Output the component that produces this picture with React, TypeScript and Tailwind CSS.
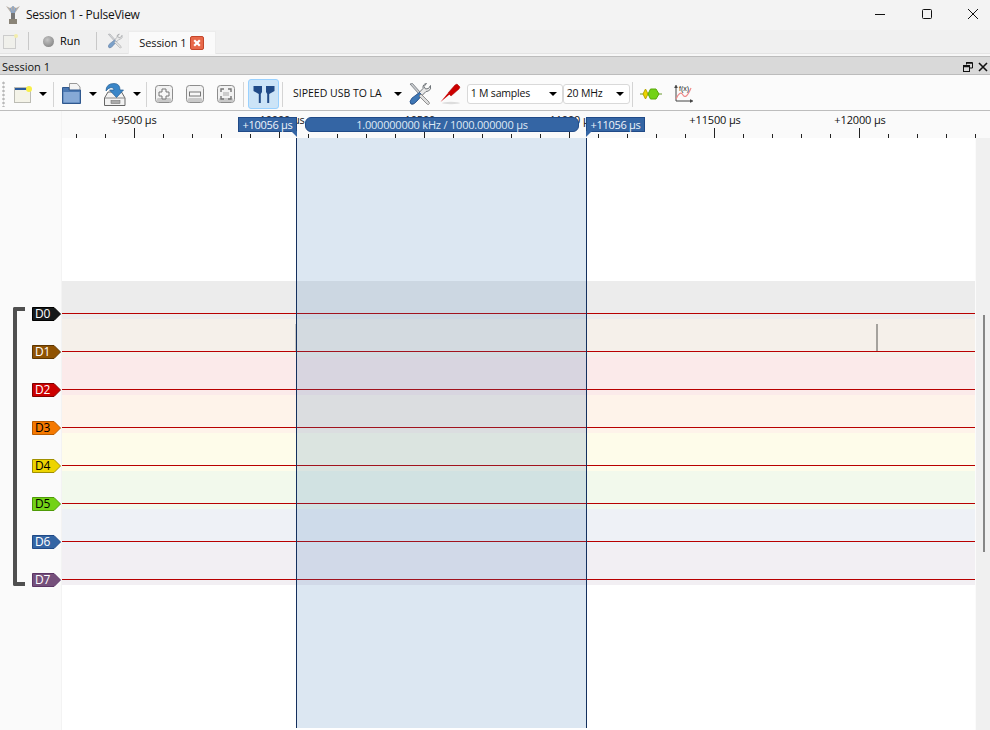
import React from "react";

const ff = { fontFamily: '"Segoe UI", "Open Sans", "Noto Sans", sans-serif' };

const channels = [
  { n: "D0", bg: "#16191a", bd: "#000000", fg: "#ffffff", band: "#ececec" },
  { n: "D1", bg: "#8f5202", bd: "#5e3601", fg: "#ffffff", band: "#f5f0ea" },
  { n: "D2", bg: "#cc0000", bd: "#800000", fg: "#ffffff", band: "#fbeaea" },
  { n: "D3", bg: "#f57900", bd: "#b85b00", fg: "#000000", band: "#fef3ea" },
  { n: "D4", bg: "#edd400", bd: "#a09000", fg: "#000000", band: "#fefcea" },
  { n: "D5", bg: "#73d216", bd: "#4e9a06", fg: "#000000", band: "#f2f9ec" },
  { n: "D6", bg: "#3465a4", bd: "#204a87", fg: "#ffffff", band: "#eef1f6" },
  { n: "D7", bg: "#75507b", bd: "#5c3566", fg: "#ffffff", band: "#f2eff3" },
];

const ticks = Array.from({ length: 63 }, (_, i) => i);

function Caret() {
  return <div className="w-0 h-0 border-l-[4px] border-r-[4px] border-t-[4px] border-l-transparent border-r-transparent border-t-black" />;
}

function Sep() {
  return <div className="w-px h-[25px] bg-[#d4d4d4]" />;
}

function SquareBtn({ children }: { children: React.ReactNode }) {
  return (
    <svg width="20" height="20" viewBox="0 0 20 20" className="shrink-0">
      <rect x="1.5" y="1.5" width="17" height="17" rx="3" fill="#f2f2f2" stroke="#8d8d8d" />
      <rect x="2.5" y="14" width="15" height="4" rx="2" fill="#c9c9c9" />
      {children}
    </svg>
  );
}

function Wrench({ size = 24, faded = false }: { size?: number; faded?: boolean }) {
  return (
    <svg width={size} height={size} viewBox="0 0 24 24" className="shrink-0" opacity={faded ? 0.65 : 1}>
      <path d="M18.5 1.5 L16 4.5 L17.5 7 L20.5 6.5 L22.5 3.5 Q23.5 7.5 20.5 9 L18 9.5 L6 21.5 Q4 23 3 21.5 Q2 20 3.5 18.5 L15 6.5 Q14.5 2 18.5 1.5Z" fill="#e9e9e9" stroke="#6f7478" strokeWidth="1" />
      <path d="M2 2 L4.5 1.5 L12 10 L10.5 11.5 Z" fill="#c9ccd0" stroke="#6f7478" strokeWidth="0.8" />
      <path d="M11.5 10.5 L14 13 L9 19 Q6 23 3 22 Q0.5 20 4 16 Z" fill="#3e77b5" stroke="#204a87" strokeWidth="0.8" />
      <path d="M13 12 L21 20 Q22 22 20.5 22.5 Q19 22.5 18 21 L11 14 Z" fill="#dedede" stroke="#777" strokeWidth="0.8" />
    </svg>
  );
}

function CursorLabel({ text, right }: { text: string; right?: boolean }) {
  return (
    <div className="relative">
      <div className="h-[15px] w-[59px] bg-[#3465a4] border border-[#204a87] text-[#eef3fa] text-[11px] tracking-[-0.3px] leading-[13px] text-center whitespace-nowrap">
        {text}
      </div>
      <div
        className={
          right
            ? "absolute right-0 top-[14px] w-0 h-0 border-t-[6px] border-l-[6px] border-t-[#3465a4] border-l-transparent"
            : "absolute left-0 top-[14px] w-0 h-0 border-t-[6px] border-r-[6px] border-t-[#3465a4] border-r-transparent"
        }
      />
    </div>
  );
}

export default function App() {
  return (
    <div className="w-[990px] h-[730px] overflow-hidden bg-[#fafafa] flex flex-col text-black" style={ff}>
      {/* Title bar */}
      <div className="h-[30px] bg-[#f3f3f3] flex items-center shrink-0">
        <svg width="16" height="20" viewBox="0 0 16 20" className="ml-[5px] shrink-0">
          <path d="M1 1 L6 8 H10 L15 1 L11 3 L8 1 L5 3 Z" fill="#b8b0a8" />
          <path d="M5 3 L7 8 M8 1 V8 M11 3 L9 8" stroke="#7aa0d0" strokeWidth="1" />
          <rect x="6" y="8" width="4" height="6" fill="#777" />
          <rect x="4" y="14" width="8" height="5" fill="#8a8478" />
        </svg>
        <span className="ml-[5px] text-[12px] tracking-[-0.24px] text-[#111]">Session 1 - PulseView</span>
        <div className="ml-auto -mr-[6px] flex items-center h-full">
          <svg width="46" height="30" viewBox="0 0 46 30"><path d="M17 14.5 H27" stroke="#111" /></svg>
          <svg width="46" height="30" viewBox="0 0 46 30"><rect x="18.5" y="9.5" width="9" height="9" rx="1" fill="none" stroke="#111" /></svg>
          <svg width="46" height="30" viewBox="0 0 46 30"><path d="M18 9 L28 19 M28 9 L18 19" stroke="#111" /></svg>
        </div>
      </div>
      {/* Tab row */}
      <div className="h-[24px] bg-[#f0f0f0] flex items-end shrink-0 border-b border-[#e4e4e4]">
        <div className="h-[24px] flex items-center">
          <svg width="16" height="16" viewBox="0 0 16 16" className="ml-[3px] shrink-0 opacity-50">
            <rect x="0.5" y="2.5" width="12" height="13" fill="#f1f1e8" stroke="#aaa" />
            <circle cx="13" cy="3" r="2" fill="#f6ec6a" />
          </svg>
          <div className="ml-[9px] w-px h-[18px] bg-[#c8c8c8]" />
          <div className="ml-[14px] w-[11px] h-[11px] rounded-full bg-[radial-gradient(circle_at_40%_35%,#c4c4c4,#777)]" />
          <span className="ml-[6px] text-[11px]">Run</span>
          <div className="ml-[16px] w-px h-[18px] bg-[#c8c8c8]" />
          <div className="ml-[10px]"><Wrench size={16} faded /></div>
        </div>
        <div className="ml-[5px] w-[88px] h-[23px] bg-[#fafafa] border-t border-x border-[#ececec] flex items-center pl-[10px] -mb-px">
          <span className="text-[11px] tracking-[-0.1px] text-[#111]">Session 1</span>
          <svg width="14" height="14" viewBox="0 0 14 14" className="ml-[4px]">
            <rect x="0.5" y="0.5" width="13" height="13" rx="1.5" fill="#e8694a" stroke="#c4462a" />
            <path d="M4.2 4.2 L9.8 9.8 M9.8 4.2 L4.2 9.8" stroke="#fff" strokeWidth="2.2" />
          </svg>
        </div>
      </div>
      <div className="h-[2px] bg-[#f7f7f7] shrink-0" />
      {/* Dock title */}
      <div className="h-[19px] bg-[#d9d9d9] border-y border-[#bcbcbc] flex items-center pt-[3px] shrink-0">
        <span className="ml-[2px] text-[11px] text-[#111]">Session 1</span>
        <div className="ml-auto flex items-center gap-[5px] pr-[2px]">
          <svg width="10" height="10" viewBox="0 0 10 10">
            <path d="M3.5 2.5 V0.5 H9.5 V6 H7" fill="none" stroke="#111" />
            <path d="M3 1 H9" stroke="#111" strokeWidth="1.5" />
            <rect x="0.5" y="3.5" width="6" height="6" fill="none" stroke="#111" />
            <path d="M0 4.5 H7" stroke="#111" strokeWidth="1.5" />
          </svg>
          <svg width="10" height="10" viewBox="0 0 10 10"><path d="M1 1 L9 9 M9 1 L1 9" stroke="#111" strokeWidth="1.6" /></svg>
        </div>
      </div>
      {/* Toolbar */}
      <div className="h-[36px] bg-[#fbfbfb] border-b border-[#bdbdbd] flex items-center pt-[3px] shrink-0">
        <div className="ml-[2px] w-[3px] h-[26px] bg-[radial-gradient(#b8b8b8_1px,transparent_1.2px)] bg-[length:3px_4px]" />
        <svg width="20" height="20" viewBox="0 0 20 20" className="ml-[8px] shrink-0">
          <rect x="1.5" y="3.5" width="16" height="15" fill="#f4f3e8" stroke="#bcbcb4" />
          <rect x="2" y="4" width="15" height="2" fill="#2a5a9c" />
          <circle cx="16" cy="5" r="3" fill="#f8ef4a" />
        </svg>
        <div className="ml-[6px]"><Caret /></div>
        <div className="ml-[6px]"><Sep /></div>
        <svg width="22" height="24" viewBox="0 0 22 24" className="ml-[7px] shrink-0">
          <path d="M8.5 1.5 H16 L19 5 V13 H8.5 Z" fill="#f4f4f4" stroke="#999" />
          <path d="M1.5 5.5 H8 V8 H19.5 V21.5 H1.5 Z" fill="#4b78b2" stroke="#30588e" />
          <rect x="2.5" y="10" width="16" height="10.5" fill="#86a9d6" />
        </svg>
        <div className="ml-[6px]"><Caret /></div>
        <svg width="24" height="24" viewBox="0 0 24 24" className="ml-[6px] shrink-0">
          <path d="M5 10 L1.5 16 V23.5 H22 V16 L18.5 10 Z" fill="#f2f2f2" stroke="#666" />
          <path d="M2 16 H22" stroke="#888" />
          <rect x="8" y="18.5" width="9" height="3" fill="#aaa" stroke="#666" strokeWidth="0.5" />
          <path d="M3 9 Q3 1.5 11 1.5 Q17 1.5 17 8 H20.5 L13.5 15.5 L6.5 8 H11 Q11 5.5 8 5.5 Q5 6 3 9 Z" fill="#3a86c8" stroke="#205a90" strokeWidth="0.7" />
        </svg>
        <div className="ml-[6px]"><Caret /></div>
        <div className="ml-[5px]"><Sep /></div>
        <div className="ml-[7px] flex items-center gap-[11px]">
          <SquareBtn><path d="M8 5 H12 V8 H15 V12 H12 V15 H8 V12 H5 V8 H8 Z" fill="#f8f8f8" stroke="#777" /></SquareBtn>
          <SquareBtn><rect x="4.5" y="8" width="11" height="4" fill="#f8f8f8" stroke="#777" /></SquareBtn>
          <SquareBtn><path d="M5 8 V5 H8 M12 5 H15 V8 M15 12 V15 H12 M8 15 H5 V12" fill="none" stroke="#777" strokeWidth="1.4" /><rect x="7" y="8" width="6" height="4" fill="#ccc" /></SquareBtn>
        </div>
        <div className="ml-[7px]"><Sep /></div>
        <div className="ml-[4px] w-[31px] h-[30px] rounded-[3px] bg-[#cce4f7] border border-[#99d1ff] flex items-center justify-center">
          <svg width="24" height="24" viewBox="0 0 24 24">
            <path d="M1.5 4 H10 V10 L8.8 12 V21 H6.8 V12 L1.5 9 Z" fill="#204a87" />
            <path d="M22.5 4 H14 V10 L15.2 12 V21 H17.2 V12 L22.5 9 Z" fill="#204a87" />
          </svg>
        </div>
        <div className="ml-[3px]"><Sep /></div>
        <span className="ml-[10px] text-[10.5px] text-[#111] whitespace-nowrap">SIPEED USB TO LA</span>
        <div className="ml-[12px]"><Caret /></div>
        <div className="ml-[6px]"><Wrench size={24} /></div>
        <svg width="24" height="24" viewBox="0 0 24 24" className="ml-[7px] shrink-0">
          <ellipse cx="12" cy="21" rx="9" ry="1.2" fill="#ddd" />
          <path d="M1.5 20 L9 11 L10.5 12.5 Z" fill="#cc0000" />
          <path d="M9 11 L16 3 L18 2 L21 5 L20 7 L12 14 Z" fill="#cc0000" stroke="#a00000" strokeWidth="0.5" />
        </svg>
        <div className="ml-[4px] w-[96px] h-[20px] bg-white border border-[#d9d9d9] rounded-[3px] flex items-center pl-[3px] pr-[5px]">
          <span className="text-[10.5px] tracking-[-0.2px] text-[#111]">1 M samples</span>
          <div className="ml-auto"><Caret /></div>
        </div>
        <div className="w-[67px] h-[20px] bg-white border border-[#d9d9d9] rounded-[3px] flex items-center pl-[3px] pr-[5px]">
          <span className="text-[10.5px] tracking-[-0.2px] text-[#111]">20 MHz</span>
          <div className="ml-auto"><Caret /></div>
        </div>
        <div className="ml-[2px]"><Sep /></div>
        <svg width="22" height="14" viewBox="0 0 22 14" className="ml-[7px] shrink-0">
          <path d="M0 7 H22" stroke="#6a9a30" />
          <path d="M3 7 L5.5 2 L8 7 L5.5 12 Z" fill="#edd400" stroke="#b8a400" />
          <path d="M8 7 L10.5 2 H16 L19 7 L16 12 H10.5 Z" fill="#73d216" stroke="#5aa80c" />
        </svg>
        <svg width="20" height="20" viewBox="0 0 20 20" className="ml-[11px] shrink-0">
          <path d="M3 2 V17 H19" fill="none" stroke="#444" />
          <path d="M1.5 4 L3 1 L4.5 4 M17 15.5 L20 17 L17 18.5" fill="#444" stroke="#444" strokeWidth="0.6" />
          <path d="M3 15 Q7 6 10 11 T18 4" fill="none" stroke="#ef8a8a" strokeWidth="1.2" />
          <text x="6" y="6.5" fontSize="7" fill="#222" fontFamily="Liberation Sans, sans-serif">f(x)</text>
        </svg>
      </div>
      {/* Session body */}
      <div className="flex-1 flex min-h-0">
        <div className="w-[62px] shrink-0 bg-[#fafafa] border-r border-[#f3f3f3] flex flex-col">
          <div className="h-[196px] shrink-0" />
          <div className="relative flex flex-col gap-[24px] pl-[32px]">
            {/* group bracket */}
            <div className="absolute left-[13px] top-0 w-[12px] h-[279px] border-l-[4px] border-y-[4px] border-[#4f4f4f] rounded-l-[2px]" />
            {channels.map((c) => (
              <div key={c.n} className="relative w-[29px] h-[14px]">
                <svg width="29" height="14" viewBox="0 0 29 14" className="absolute inset-0">
                  <path d="M0.5 0.5 H22 L28.5 7 L22 13.5 H0.5 Z" fill={c.bg} stroke={c.bd} />
                </svg>
                <span className="absolute left-[3px] top-0 text-[12px] leading-[14px] tracking-[-0.3px]" style={{ color: c.fg }}>{c.n}</span>
              </div>
            ))}
          </div>
        </div>
        <div className="flex-1 flex flex-col min-w-0 relative">
          {/* Ruler */}
          <div className="relative h-[27px] shrink-0 bg-[#fafafa] overflow-hidden">
            {[
              ["+9500 µs", 72],
              ["+10000 µs", 217],
              ["+10500 µs", 362],
              ["+11000 µs", 507],
              ["+11500 µs", 653],
              ["+12000 µs", 798],
            ].map(([t, x]) => (
              <span key={t as string} className="absolute top-[1px] text-[11px] tracking-[-0.15px] leading-[16px] text-[#111] -translate-x-1/2 whitespace-nowrap" style={{ left: x as number }}>{t}</span>
            ))}
            {ticks.map((i) => {
              const x = 72.5 + (i - 3) * 29;
              return x >= 0 && x < 914 ? (
                <div key={i} className="absolute bottom-0 w-px bg-[#222]" style={{ left: Math.round(x - 0.5), height: (i - 3) % 5 === 0 ? 10 : 4 }} />
              ) : null;
            })}
          </div>
          {/* Traces */}
          <div className="flex-1 bg-white flex min-h-0">
            <div className="w-[913px] flex flex-col pt-[143px]">
              {channels.map((c, i) => (
                <div key={c.n} className="h-[38px] relative" style={{ background: c.band }}>
                  <div className="absolute left-0 right-0 top-[32px] h-px bg-[#b80000]" />
                  {i === 1 && <div className="absolute left-[814px] top-[5px] h-[27px] w-[2px] bg-[#a5a29d]" />}
                  {i === 1 && <div className="absolute left-[233px] top-[5px] h-[27px] w-px bg-[#c9c6c2]" />}
                </div>
              ))}
            </div>
            <div className="w-px bg-[#fbfbfb]" />
            <div className="flex-1 bg-[#f0f0f0] relative">
              <div className="absolute left-[7px] top-[177px] w-[2px] h-[237px] bg-[#868686]" />
            </div>
          </div>
          {/* Cursors overlay */}
          <div className="absolute left-[234px] top-[27px] bottom-[2px] w-[291px] bg-[#3070b0]/[0.17] border-x border-[#14305e]" />
          <div className="absolute left-[176px] top-[6px]"><CursorLabel text="+10056 µs" right /></div>
          <div className="absolute left-[524px] top-[6px]"><CursorLabel text="+11056 µs" /></div>
          <div className="absolute left-[243px] top-[6px] w-[274px] h-[15px] bg-[#3465a4] border border-[#204a87] rounded-[6px] text-[#dfe8f4] text-[11px] tracking-[-0.2px] leading-[13px] text-center whitespace-nowrap">1.000000000 kHz / 1000.000000 µs</div>
        </div>
      </div>
    </div>
  );
}
